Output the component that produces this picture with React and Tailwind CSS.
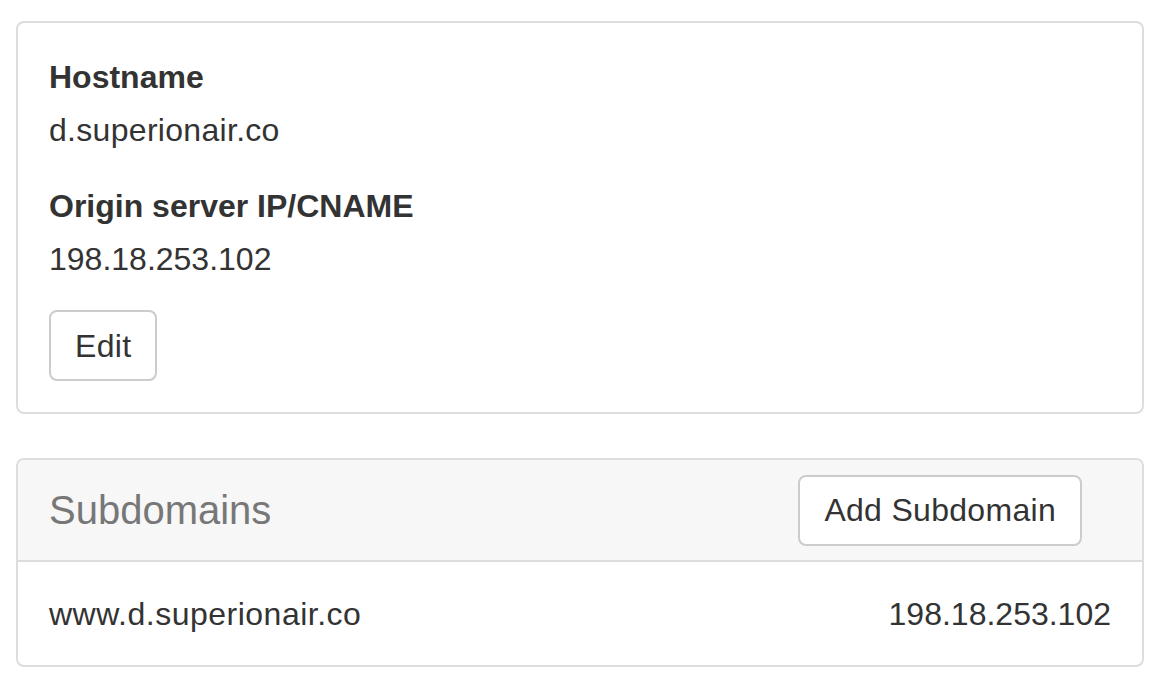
import React from 'react';

const Field = ({ label, value, first, numeric }) => (
  <div className={first ? '' : 'mt-[30px]'}>
    <div className="text-[32px] leading-[46px] font-bold text-[#333]">{label}</div>
    <div className={`mt-[7px] text-[32px] leading-[46px] text-[#333] ${numeric ? '' : 'tracking-[0.3px]'}`}>{value}</div>
  </div>
);

const Button = ({ children }) => (
  <button className="h-[71px] px-[24px] flex items-center border-2 border-[#ccc] rounded-[8px] bg-white text-[32px] leading-[46px] tracking-[0.3px] text-[#333]">
    {children}
  </button>
);

const App = () => {
  return (
    <div
      className="w-[1166px] h-[686px] bg-white pt-[21px] pl-[16px] overflow-hidden"
      style={{ fontFamily: '"Liberation Sans", Arial, sans-serif' }}
    >
      {/* Origin details */}
      <div className="w-[1128px] border-2 border-[#ddd] rounded-[8px] px-[31px] pt-[31px] pb-[31px]">
        <Field first label="Hostname" value="d.superionair.co" />
        <Field numeric label="Origin server IP/CNAME" value="198.18.253.102" />
        <div className="mt-[28px]">
          <Button>Edit</Button>
        </div>
      </div>

      {/* Subdomains */}
      <div className="mt-[44px] w-[1128px] border-2 border-[#ddd] rounded-[8px] overflow-hidden">
        <div className="h-[102px] bg-[#f7f7f7] border-b-2 border-[#ddd] pl-[31px] pr-[60px] flex items-center justify-between">
          <h3 className="text-[40px] leading-[50px] text-[#777]">Subdomains</h3>
          <Button>Add Subdomain</Button>
        </div>
        <div className="h-[103px] px-[31px] flex items-center justify-between text-[32px] leading-[46px] text-[#333]">
          <span className="tracking-[0.5px]">www.d.superionair.co</span>
          <span>198.18.253.102</span>
        </div>
      </div>
    </div>
  );
};

export default App;
